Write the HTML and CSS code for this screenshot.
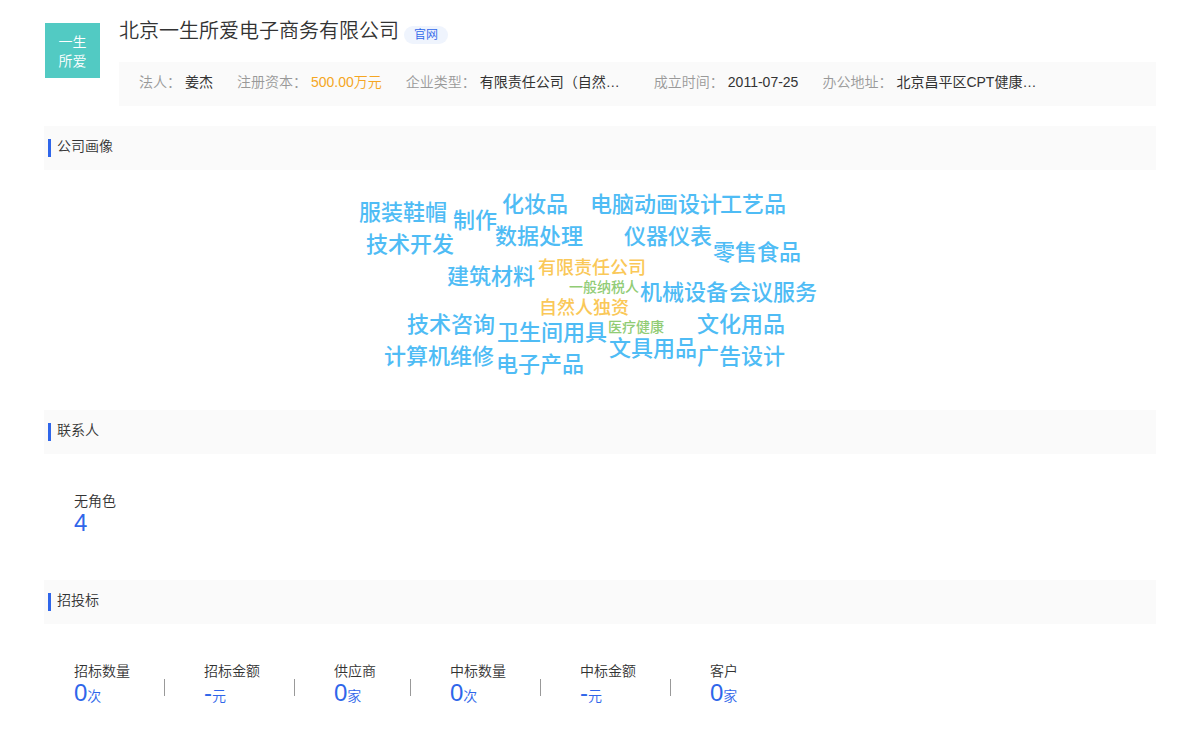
FILE: index.html
```
<!DOCTYPE html>
<html lang="zh-CN">
<head>
<meta charset="utf-8">
<title>北京一生所爱电子商务有限公司</title>
<link rel="stylesheet" href="styles.css">
</head>
<body>
<main class="page">
  <header class="company">
    <div class="logo"><span>一生</span><span>所爱</span></div>
    <div class="company-main">
      <div class="title-row">
        <h1 class="company-name">北京一生所爱电子商务有限公司</h1>
        <a class="site-link" href="#">官网</a>
      </div>
      <dl class="facts">
        <div class="fact"><dt>法人：</dt><dd>姜杰</dd></div>
        <div class="fact"><dt>注册资本：</dt><dd class="money">500.00万元</dd></div>
        <div class="fact"><dt>企业类型：</dt><dd class="clipped">有限责任公司（自然…</dd></div>
        <div class="fact"><dt>成立时间：</dt><dd>2011-07-25</dd></div>
        <div class="fact"><dt>办公地址：</dt><dd class="clipped">北京昌平区CPT健康…</dd></div>
      </dl>
    </div>
  </header>

  <section class="portrait">
    <h2 class="section-title">公司画像</h2>
    <ul class="cloud">
      <li class="word" style="left:9px;top:12px">服装鞋帽</li>
      <li class="word" style="left:103px;top:20px">制作</li>
      <li class="word" style="left:152px;top:4px">化妆品</li>
      <li class="word" style="left:240px;top:4px">电脑动画设计</li>
      <li class="word" style="left:370px;top:4px">工艺品</li>
      <li class="word" style="left:16px;top:44px">技术开发</li>
      <li class="word" style="left:145px;top:36px">数据处理</li>
      <li class="word" style="left:274px;top:36px">仪器仪表</li>
      <li class="word" style="left:363px;top:52px">零售食品</li>
      <li class="word" style="left:97px;top:76px">建筑材料</li>
      <li class="word type" style="left:188px;top:69px">有限责任公司</li>
      <li class="word tag" style="left:219px;top:90px">一般纳税人</li>
      <li class="word" style="left:290px;top:92px">机械设备</li>
      <li class="word" style="left:379px;top:92px">会议服务</li>
      <li class="word type" style="left:189px;top:109px">自然人独资</li>
      <li class="word" style="left:57px;top:124px">技术咨询</li>
      <li class="word" style="left:147px;top:132px">卫生间用具</li>
      <li class="word tag" style="left:258px;top:130px">医疗健康</li>
      <li class="word" style="left:347px;top:124px">文化用品</li>
      <li class="word" style="left:34px;top:156px">计算机维修</li>
      <li class="word" style="left:146px;top:164px">电子产品</li>
      <li class="word" style="left:259px;top:148px">文具用品</li>
      <li class="word" style="left:347px;top:156px">广告设计</li>
    </ul>
  </section>

  <section class="contacts">
    <h2 class="section-title">联系人</h2>
    <dl class="stats">
      <div class="stat"><dt>无角色</dt><dd>4</dd></div>
    </dl>
  </section>

  <section class="bids">
    <h2 class="section-title">招投标</h2>
    <dl class="stats">
      <div class="stat"><dt>招标数量</dt><dd>0<small>次</small></dd></div>
      <div class="stat"><dt>招标金额</dt><dd>-<small>元</small></dd></div>
      <div class="stat"><dt>供应商</dt><dd>0<small>家</small></dd></div>
      <div class="stat"><dt>中标数量</dt><dd>0<small>次</small></dd></div>
      <div class="stat"><dt>中标金额</dt><dd>-<small>元</small></dd></div>
      <div class="stat"><dt>客户</dt><dd>0<small>家</small></dd></div>
    </dl>
  </section>
</main>
</body>
</html>
```
FILE: styles.css
```
* { box-sizing: border-box; }

body, h1, h2, dl, dd, ul { margin: 0; padding: 0; }

body {
  background: #fff;
  color: #333;
  font: 350 14px/20px "Liberation Sans", "Noto Sans CJK SC", sans-serif;
}

h1, h2 { font-weight: 350; }

.page { padding: 16px 44px 24px; }

.company {
  display: flex;
  align-items: flex-start;
  gap: 19px;
  padding-left: 1px;
  margin-bottom: 20px;
}

.logo {
  display: flex;
  flex-direction: column;
  justify-content: center;
  align-items: center;
  flex: none;
  width: 55px;
  height: 55px;
  margin-top: 7px;
  padding-top: 3px;
  background: #52cac3;
  color: #fff;
  line-height: 19px;
}

.company-main { flex: 1; min-width: 0; }

.title-row {
  display: flex;
  align-items: center;
  gap: 5px;
  margin-bottom: 16px;
}

.company-name { font-size: 20px; line-height: 30px; }

.site-link {
  padding: 0 10px;
  margin-top: 8px;
  border-radius: 9px;
  background: #eff4fd;
  color: #2f66ea;
  font-size: 12px;
  line-height: 18px;
  text-decoration: none;
}

.facts {
  display: flex;
  gap: 24px;
  height: 44px;
  padding: 10px 20px;
  background: #fafafa;
  white-space: nowrap;
}

.fact { display: flex; gap: 4px; }
.fact dt { color: #999; }
.fact dd { color: #333; font-weight: 400; }
.fact .money { color: #f5a623; font-weight: 350; }
.fact .clipped { width: 150px; }

.section-title {
  display: flex;
  align-items: flex-start;
  gap: 6px;
  padding: 10px 4px 13px;
  background: #fafafa;
  font-size: 14px;
  line-height: 20px;
}

.section-title::before {
  content: "";
  width: 3px;
  height: 18px;
  margin-top: 3px;
  background: #2f66ea;
}

.cloud {
  position: relative;
  width: 500px;
  height: 200px;
  margin: 20px auto;
  list-style: none;
}

.word {
  position: absolute;
  color: #4fbcf5;
  font-size: 22px;
  line-height: 22px;
  font-weight: 500;
  white-space: nowrap;
}

.word.type { color: #fac858; font-size: 18px; line-height: 18px; }
.word.tag { color: #91cc75; font-size: 14px; line-height: 14px; }

.stats {
  display: flex;
  padding: 37px 30px 0;
}

.contacts .stats { padding-bottom: 45px; }

.stat {
  display: flex;
  flex-direction: column;
  position: relative;
  padding-right: 74px;
}

.stat:not(:last-child)::after {
  content: "";
  position: absolute;
  right: 39px;
  top: 18px;
  width: 1px;
  height: 17px;
  background: #999;
}

.stat dt { line-height: 20px; }

.stat dd {
  color: #2f66ea;
  font-size: 24px;
  line-height: 24px;
}

.stat small { font-size: 14px; line-height: 20px; }
```
